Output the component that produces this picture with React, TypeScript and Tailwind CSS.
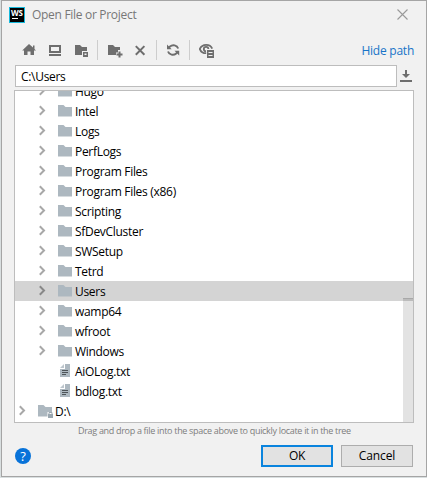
import { clsx } from "clsx";
import { type ReactNode } from "react";

type NodeKind = "folder" | "file" | "drive";

interface TreeNode {
  name: string;
  kind: NodeKind;
  selected?: boolean;
}

const NODES: TreeNode[] = [
  { name: "Hugo", kind: "folder" },
  { name: "Intel", kind: "folder" },
  { name: "Logs", kind: "folder" },
  { name: "PerfLogs", kind: "folder" },
  { name: "Program Files", kind: "folder" },
  { name: "Program Files (x86)", kind: "folder" },
  { name: "Scripting", kind: "folder" },
  { name: "SfDevCluster", kind: "folder" },
  { name: "SWSetup", kind: "folder" },
  { name: "Tetrd", kind: "folder" },
  { name: "Users", kind: "folder", selected: true },
  { name: "wamp64", kind: "folder" },
  { name: "wfroot", kind: "folder" },
  { name: "Windows", kind: "folder" },
  { name: "AiOLog.txt", kind: "file" },
  { name: "bdlog.txt", kind: "file" },
  { name: "D:\\", kind: "drive" },
];

function Icon({ children, className }: { children: ReactNode; className?: string }) {
  return (
    <svg viewBox="0 0 16 16" className={clsx("h-4 w-4 shrink-0", className)}>
      {children}
    </svg>
  );
}

function NodeIcon({ kind }: { kind: NodeKind }) {
  if (kind === "file") {
    return (
      <Icon>
        <path d="M7 1h5v13H2V6h5z" fill="#adb8c0" />
        <path d="M6 1v4H2z" fill="#adb8c0" opacity="0.8" />
        <path d="M4 7h6v1H4zM4 9h6v1H4zM4 11h4v1H4z" fill="#4d5357" />
      </Icon>
    );
  }
  return (
    <Icon>
      <path d="M0 2h5.500l2 2H14v9.500H0z" fill="#adb8c0" />
      {kind === "drive" && (
        <>
          <path d="M9.500 9H14v5H9.500z" fill="#fff" />
          <path d="M10 11h5v4h-5z" fill="#9aa7b0" />
          <path d="M11 11V9.500h3V11" fill="none" stroke="#9aa7b0" />
        </>
      )}
    </Icon>
  );
}

function TreeRow({ node }: { node: TreeNode }) {
  return (
    <div
      className={clsx(
        "flex h-5 shrink-0 items-center",
        node.kind === "drive" ? "pl-[2px]" : "pl-[22px]",
        node.selected && "bg-[#d4d4d4]",
      )}
    >
      <Icon className="mr-[5px] -translate-y-[1px]">
        {node.kind !== "file" && (
          <path
            d="M2.800 4.300 7 8.500l-4.200 4.200"
            fill="none"
            stroke={node.selected ? "#888" : "#a8a8a8"}
            strokeWidth="2"
          />
        )}
      </Icon>
      <NodeIcon kind={node.kind} />
      <span className="ml-px pt-[2px] text-[12px] leading-5 tracking-[-0.3px] whitespace-pre">
        {node.name}
      </span>
    </div>
  );
}

function Separator() {
  return <span className="h-5 w-px bg-[#cdcdcd]" />;
}

function Toolbar() {
  return (
    <div className="mt-[11px] flex h-5 items-center pl-[19px] text-[#6e6e6e]">
      <Icon>
        <path
          d="M8 2l4 3.600V3.500h1.500V7l1.500 1.500h-2V13H9.500V9.500h-3V13H3V8.500H1.200z"
          fill="currentColor"
        />
      </Icon>
      <Icon className="ml-[11px]">
        <path d="M1 3h12v8H1zM3 5v4h8V5zM1 12h12v2H1z" fill="currentColor" fillRule="evenodd" />
      </Icon>
      <Icon className="ml-[10px]">
        <path d="M1 3h5l2 2h5v4H8v4H1z" fill="currentColor" />
        <path d="M9 10h5v5H9zM10.500 11.500V13h2v-1.500z" fill="currentColor" fillRule="evenodd" />
      </Icon>
      <span className="w-[7px]" />
      <Separator />
      <span className="w-[10px]" />
      <Icon>
        <path d="M0 3h5l2 2h5v3h-2v2.500H8V13H0z" fill="currentColor" />
        <path d="M11.500 9.500v6M8.500 12.500h6" stroke="currentColor" strokeWidth="2" />
      </Icon>
      <Icon className="ml-[11px]">
        <path d="m.8 4.100 8.600 8.600M9.400 4.100.8 12.700" stroke="currentColor" strokeWidth="2" />
      </Icon>
      <span className="w-[5px]" />
      <Separator />
      <span className="w-[9px]" />
      <Icon>
        <path
          d="M12.200 6.500A5 4.700 0 0 0 4 4.500L2.600 5.800M2 9.500a5 4.700 0 0 0 8.200 2L11.600 10"
          fill="none"
          stroke="currentColor"
          strokeWidth="1.900"
        />
        <path d="M1 2.500v4.700h4.700zM13.200 13.500V8.800H8.500z" fill="currentColor" />
      </Icon>
      <span className="w-[7px]" />
      <Separator />
      <span className="w-[9px]" />
      <Icon>
        <path
          d="M7.200 11.200C4 11.200 1.700 9.500.8 7 2 4.300 4.500 2.900 7.200 2.900c2.700 0 5 1.400 6 3.800"
          fill="none"
          stroke="currentColor"
          strokeWidth="1.800"
        />
        <path
          d="M7 9.400A2.300 2.300 0 1 1 9.400 7"
          fill="none"
          stroke="currentColor"
          strokeWidth="1.800"
        />
        <path d="M8 8h7v8H8zM9.500 10v1h4v-1zM9.500 13v1h4v-1z" fill="currentColor" fillRule="evenodd" />
      </Icon>
      <a className="mt-[2px] mr-3 ml-auto text-[12px] tracking-[-0.24px] text-[#1874c8]">
        Hide path
      </a>
    </div>
  );
}

export default function App() {
  return (
    <div className="h-[478px] w-[427px] overflow-hidden bg-[#d9dfe0] pl-px font-['Open_Sans',sans-serif] text-black">
      <div className="flex h-[477px] w-[426px] flex-col border border-[#a5a5a5] bg-[#f1f1f1]">
        <header className="flex h-[28px] items-center pr-[18px] pl-[7px]">
          <div className="flex h-4 w-4 flex-col items-start border border-[#16b9dc] bg-black text-white">
            <span className="mt-px ml-px text-[8px] leading-[7px] font-bold tracking-[-0.300px]">
              WS
            </span>
            <span className="mt-[2px] ml-[2px] h-px w-[6px] bg-white" />
          </div>
          <h1 className="ml-[7px] text-[12px] tracking-[-0.3px] text-[#777]">
            Open File or Project
          </h1>
          <svg viewBox="0 0 11 11" className="-mt-px ml-auto h-[11px] w-[11px]">
            <path d="m.5.5 10 10M10.500.5l-10 10" stroke="#999" strokeWidth="1.100" />
          </svg>
        </header>

        <Toolbar />

        <div className="mt-[5px] flex h-[22px] shrink-0 pl-[13px]">
          <div className="flex w-[382px] items-center border border-[#bdbdbd] bg-white pt-px pl-[5px] text-[12px] tracking-[-0.3px]">
            C:\Users
          </div>
          <svg viewBox="0 0 16 16" className="mt-[3px] ml-px h-4 w-4 text-[#6e6e6e]">
            <path d="M7 2h2v4h3l-4 4-4-4h3zM2 12h12v2H2z" fill="currentColor" />
          </svg>
        </div>

        <div className="relative mt-[3px] ml-3 flex h-[333px] w-[400px] shrink-0 flex-col overflow-hidden border border-[#bdbdbd] bg-white">
          {/* list is scrolled by half a row */}
          <div className="-mt-[10px] flex flex-col">
            {NODES.map((node) => (
              <TreeRow key={node.name} node={node} />
            ))}
          </div>
          <div className="absolute right-0 bottom-0 h-[124px] w-[10px] border-t border-black/10 bg-black/11" />
        </div>

        <p className="h-[15px] pl-[76px] text-[9px] leading-[15px] tracking-[-0.31px] whitespace-nowrap text-[#7d7d7d]">
          Drag and drop a file into the space above to quickly locate it in the tree
        </p>

        <footer className="mt-[7px] flex h-[22px] items-center pr-[13px] pl-[13px] text-[12px]">
          <button className="flex h-4 w-4 items-center justify-center rounded-full bg-[#0873d9] text-[13px] leading-4 text-white">
            ?
          </button>
          <button className="ml-auto flex h-[22px] w-[72px] items-center justify-center border-2 border-[#0a84de] bg-[#e2e2e2] tracking-[-0.3px]">
            OK
          </button>
          <button className="ml-2 flex h-[22px] w-[72px] items-center justify-center border border-[#adadad] bg-[#e2e2e2] tracking-[-0.1px]">
            Cancel
          </button>
        </footer>
      </div>
    </div>
  );
}
